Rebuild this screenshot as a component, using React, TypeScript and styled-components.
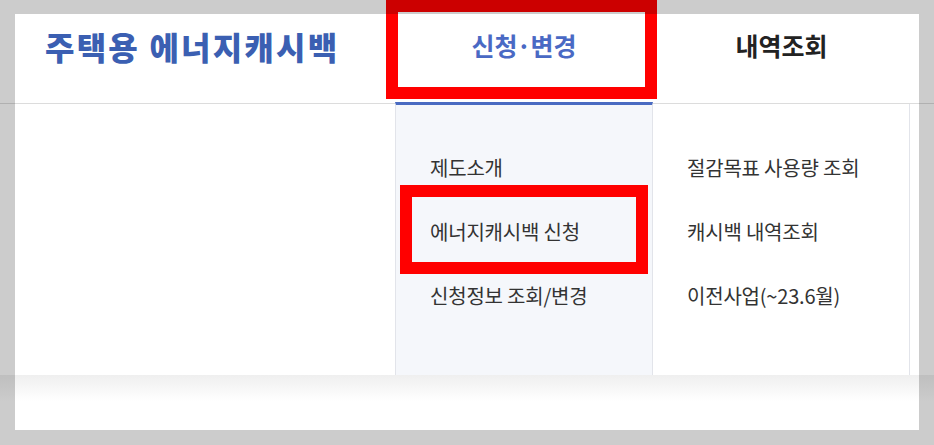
import React from "react";
import styled, { createGlobalStyle } from "styled-components";

const GlobalStyle = createGlobalStyle`
  html, body { margin: 0; padding: 0; background: #ffffff; }
  body { font-family: "Noto Sans CJK KR", "Noto Sans", sans-serif; }
  * { box-sizing: border-box; }
`;

const Page = styled.div`
  position: relative;
  width: 934px;
  height: 445px;
  overflow: hidden;
  background: #ffffff;
`;

const Header = styled.header`
  display: flex;
  height: 104px;
  border-bottom: 1px solid #dcdcdc;
`;

const LogoArea = styled.div`
  width: 395px;
  display: flex;
  align-items: center;
  padding-left: 45px;
  padding-bottom: 12px;
`;

const Logo = styled.h1`
  margin: 0;
  font-family: "Noto Sans CJK KR", sans-serif;
  font-size: 32px;
  font-weight: 900;
  letter-spacing: 2.2px;
  color: #3b5fb2;
  white-space: nowrap;
`;

const Nav = styled.nav`
  display: flex;
`;

const NavItem = styled.div<{ $active?: boolean; $w: number }>`
  position: relative;
  width: ${(p) => p.$w}px;
  display: flex;
  align-items: center;
  justify-content: center;
  padding-bottom: 14px;
  font-size: 25px;
  font-weight: 700;
  color: ${(p) => (p.$active ? "#4a69c4" : "#222222")};
`;

const Dot = styled.span`
  margin: 0 -1px;
`;

const RedBox = styled.span<{ $t: number; $r: number; $b: number; $l: number }>`
  position: absolute;
  top: ${(p) => p.$t}px;
  right: ${(p) => p.$r}px;
  bottom: ${(p) => p.$b}px;
  left: ${(p) => p.$l}px;
  border: 12px solid #ff0000;
  pointer-events: none;
`;

const Panel = styled.div`
  display: flex;
  height: 271px;
`;

const Spacer = styled.div`
  width: 395px;
`;

const Column = styled.ul<{ $active?: boolean }>`
  list-style: none;
  margin: ${(p) => (p.$active ? "-2px 0 0" : "0")};
  padding: ${(p) => (p.$active ? "31px 0 0 34px" : "32px 0 0 34px")};
  width: ${(p) => (p.$active ? 258 : 257)}px;
  background: ${(p) => (p.$active ? "#f5f7fb" : "#ffffff")};
  border-top: ${(p) => (p.$active ? "3px solid #4a6bc2" : "none")};
  border-left: ${(p) => (p.$active ? "1px solid #e2e4ea" : "none")};
  border-right: 1px solid #e2e4ea;
`;

const MenuItem = styled.li`
  position: relative;
  height: 64px;
  line-height: 64px;
  font-size: 20px;
  font-weight: 400;
  color: #333333;
  letter-spacing: -0.2px;
  white-space: nowrap;
`;

const Shade = styled.div`
  height: 26px;
  background: linear-gradient(#efefef, #ffffff);
`;

const Frame = styled.div`
  position: fixed;
  inset: 0;
  width: 934px;
  height: 445px;
  border-style: solid;
  border-color: rgba(0, 0, 0, 0.2);
  border-width: 14px 15px 15px 15px;
  pointer-events: none;
`;

export default function App() {
  return (
    <Page>
      <GlobalStyle />
      <Header>
        <LogoArea>
          <Logo>주택용 에너지캐시백</Logo>
        </LogoArea>
        <Nav>
          <NavItem $active $w={258}>
            신청<Dot>·</Dot>변경
            <RedBox $t={0} $r={-4} $b={4} $l={-9} />
          </NavItem>
          <NavItem $w={257}>내역조회</NavItem>
        </Nav>
      </Header>
      <Panel>
        <Spacer />
        <Column $active>
          <MenuItem>제도소개</MenuItem>
          <MenuItem>
            에너지캐시백 신청
            <RedBox $t={-15} $r={4} $b={-10} $l={-30} />
          </MenuItem>
          <MenuItem>신청정보 조회/변경</MenuItem>
        </Column>
        <Column>
          <MenuItem>절감목표 사용량 조회</MenuItem>
          <MenuItem>캐시백 내역조회</MenuItem>
          <MenuItem>이전사업(~23.6월)</MenuItem>
        </Column>
      </Panel>
      <Shade />
      <Frame />
    </Page>
  );
}
